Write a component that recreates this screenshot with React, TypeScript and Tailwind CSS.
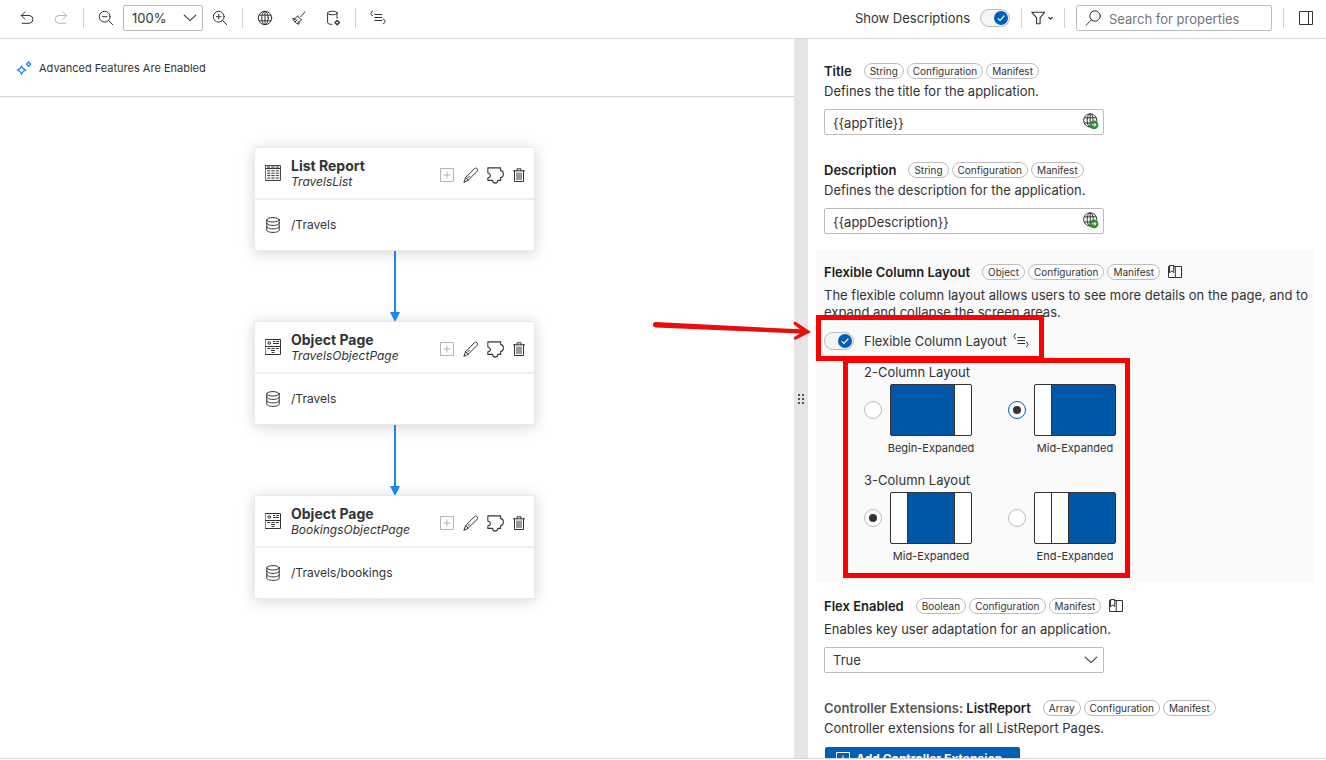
import { Fragment, useState } from "react";
import type { ReactNode } from "react";

function Icon({ children, size = 16, className = "" }: { children: ReactNode; size?: number; className?: string }) {
  return (
    <svg
      width={size}
      height={size}
      viewBox="0 0 16 16"
      fill="none"
      stroke="currentColor"
      strokeWidth="1"
      strokeLinecap="round"
      strokeLinejoin="round"
      aria-hidden="true"
      className={`shrink-0 ${className}`}
    >
      {children}
    </svg>
  );
}

const UndoIcon = () => (
  <Icon>
    <path d="M6 1.8 2.3 5.5 6 9.2M2.3 5.5H10a3.9 3.9 0 0 1 0 7.8H3.2" />
  </Icon>
);
const RedoIcon = () => (
  <Icon>
    <path d="M10 1.8l3.7 3.7L10 9.2M13.7 5.5H6a3.9 3.9 0 0 0 0 7.8h6.8" />
  </Icon>
);
const ZoomIcon = ({ plus = false }: { plus?: boolean }) => (
  <Icon>
    <circle cx="6.7" cy="6.7" r="5.4" />
    <path d="M10.7 10.7l4 4M4.4 6.7H9" />
    {plus && <path d="M6.7 4.4V9" />}
  </Icon>
);
const GlobeIcon = () => (
  <Icon>
    <circle cx="8" cy="8" r="6.7" />
    <ellipse cx="8" cy="8" rx="3.2" ry="6.7" />
    <path d="M8 1.3v13.4M2.2 5.2h11.6M2.2 10.8h11.6" />
  </Icon>
);
const BroomIcon = () => (
  <Icon>
    <path d="M14 1.8 9.6 6.9M6.6 6.2l3.9 3.6M6.6 6.2C5.4 7.8 3.8 8.6 1.8 8.5c1 2.9 3.1 5 6 5.8.2-1.8 1-3.4 2.7-4.5M4.3 11.6l2-1.7M6.4 13.6l1.6-2.2M3 9.9l1.9-.9" />
  </Icon>
);
const DatabaseGearIcon = () => (
  <Icon>
    <ellipse cx="7.3" cy="3" rx="4.7" ry="1.8" />
    <path d="M2.6 3v9.6c0 1 1.8 1.8 4.4 1.8M12 3v5.4" />
    <path d="M12.2 10.4l2.2 2.2-2.2 2.2-2.2-2.2z" strokeWidth="1.4" />
  </Icon>
);
const SourceIcon = () => (
  <Icon>
    <path d="M4.4 4.5h7.8M4.4 7.5h7.8M4.4 10.5h7.8" strokeLinecap="butt" />
    <path d="M2.6 1C1 1 1.9 3 .8 3.4c1.1.4.2 2.4 1.8 2.4M13.4 9c1.6 0 .7 2 1.8 2.4-1.1.4-.2 2.4-1.8 2.4" />
  </Icon>
);
const ChevronDown = ({ className = "" }: { className?: string }) => (
  <svg width="14" height="8" viewBox="0 0 14 8" fill="none" stroke="currentColor" strokeWidth="1.1" strokeLinecap="round" aria-hidden="true" className={className}>
    <path d="M1.2 1.2 7 6.6l5.8-5.4" />
  </svg>
);
const FilterIcon = () => (
  <svg width="24" height="16" viewBox="0 0 24 16" fill="none" stroke="currentColor" strokeWidth="1.1" strokeLinejoin="round" strokeLinecap="round" aria-hidden="true">
    <path d="M.8 2.2h12.9L9.1 7.8v6H5.6v-6z" />
    <path d="M17.8 7.4l1.8 1.7 1.8-1.7" strokeWidth="1.3" />
  </svg>
);
const SearchIcon = ({ className }: { className: string }) => (
  <Icon className={className}>
    <circle cx="10" cy="6" r="5.2" />
    <path d="M6.4 9.8 1 15.4" />
  </Icon>
);
const PanelIcon = () => (
  <Icon>
    <path d="M1.5 1.5h13v13h-13zM10.5 1.5v13" strokeLinecap="butt" strokeLinejoin="round" />
  </Icon>
);
const SparkIcon = () => (
  <Icon className="text-[#1b84ff]">
    <path d="M5.6 4.8C6.2 7.4 7 8.2 9.8 9 7 9.8 6.2 10.6 5.6 13.4 4.9 10.6 4.1 9.8 1.2 9 4.1 8.2 4.9 7.4 5.6 4.8z" strokeWidth="1.2" />
    <path d="M12.6 1l2 2.2-2 2.2-2-2.2z" strokeWidth="1.3" />
  </Icon>
);
const ListReportIcon = () => (
  <Icon>
    <path d="M.6.6h14.8v14.8H.6zM.6 3.5h14.8" />
    <path d="M2 2.1h3M6.2 2.1h3.4M10.8 2.1h3M2.2 5.8h3M6.3 5.8h3.4M10.8 5.8h3M2.2 8.2h3M6.3 8.2h3.4M10.8 8.2h3M2.2 10.6h3M6.3 10.6h3.4M10.8 10.6h3M2.2 13h3M6.3 13h3.4M10.8 13h3" strokeLinecap="butt" />
  </Icon>
);
const ObjectPageIcon = () => (
  <Icon>
    <path d="M.5.5h15v15H.5zM.5 7.5h15" />
    <circle cx="4.2" cy="4" r="1.3" />
    <path d="M8 2.5h2M11.2 2.5H14M8 4.5h6M2.2 9.5h3M6.4 9.5h3.2M10.8 9.5h3M6 11.5h4M6.6 13.5h2.8" strokeLinecap="butt" />
  </Icon>
);
const DatabaseIcon = () => (
  <Icon>
    <ellipse cx="8" cy="2.8" rx="6.2" ry="2.2" />
    <path d="M1.8 2.8v10.4c0 1.2 2.8 2.2 6.2 2.2s6.2-1 6.2-2.2V2.8M1.8 6.2c0 1.2 2.8 2.2 6.2 2.2s6.2-1 6.2-2.2M1.8 9.7c0 1.2 2.8 2.2 6.2 2.2s6.2-1 6.2-2.2" />
  </Icon>
);
const AddIcon = ({ className = "" }: { className?: string }) => (
  <Icon className={className}>
    <path d="M1.5 1.5h13v13h-13zM8 4.6v6.8M4.6 8h6.8" strokeLinecap="butt" />
  </Icon>
);
const EditIcon = () => (
  <Icon>
    <path d="M1 15l1.6-4.4 8.6-8.7c.8-.9 2-1 2.8-.3.8.8.8 1.9 0 2.8L5.2 13.2zM2.6 10.6l2.6 2.6M4.8 10.9l1.6-1.7" />
  </Icon>
);
const ExtensionIcon = () => (
  <Icon size={17}>
    <path d="M.8.8h12v2.6c1.6 0 2.6 1.6 2.6 3.4s-1.2 3-2.6 3.2v2.6h-2.6c-.2 1.6-1.2 2.6-2.5 2.6s-2.3-1-2.5-2.6H.8v-2.4c1.6-.2 2.4-1 2.4-2.2S2.4 6 .8 5.6z" />
  </Icon>
);
const DeleteIcon = () => (
  <Icon>
    <path d="M2.5 3.8h11M3.5 3.8v10.7h9V3.8M6 3.8V1.8h4v2M6 6v6.6M8 6v6.6M10 6v6.6" />
  </Icon>
);
const BookIcon = () => (
  <Icon>
    <path d="M8.3 2.5h6.2v11h-13v-11h1.4M6.7 2.5h1.6v11M2.9 1.5h3.8v7L4.8 7 2.9 8.5z" />
  </Icon>
);
const TranslateIcon = () => (
  <svg width="16" height="17" viewBox="0 0 16 17" fill="none" stroke="currentColor" aria-hidden="true">
    <circle cx="7.2" cy="7.4" r="6.6" />
    <ellipse cx="7.2" cy="7.4" rx="3" ry="6.6" />
    <path d="M1.4 4.8H13M1.4 10H13M7.2.8V14" />
    <circle cx="11" cy="11.8" r="4.4" fill="#2f8a33" stroke="none" />
    <path d="M8.8 11.8h4.2M11.3 10l1.8 1.8-1.8 1.8" stroke="#fff" />
  </svg>
);

function ToolButton({ label, disabled, children }: { label: string; disabled?: boolean; children: ReactNode }) {
  return (
    <button type="button" aria-label={label} disabled={disabled} className="flex h-7 w-[34px] items-center justify-center disabled:text-[#b9b9b9]">
      {children}
    </button>
  );
}

const Separator = () => <span className="mx-[5px] h-5 w-px shrink-0 bg-[#d0d0d0]" />;

function Switch({ id }: { id: string }) {
  const [on, setOn] = useState(true);
  return (
    <span className="relative flex h-[18px] w-[30px] shrink-0">
      <input
        id={id}
        type="checkbox"
        role="switch"
        checked={on}
        onChange={(e) => setOn(e.target.checked)}
        className="peer size-full appearance-none rounded-full border border-[#bdbdbd] bg-[#f5f5f5]"
      />
      <svg viewBox="0 0 14 14" aria-hidden="true" className="pointer-events-none absolute top-0.5 left-0.5 size-3.5 peer-checked:left-3.5">
        <circle cx="7" cy="7" r="7" fill="#0060b8" />
        <path d="M3.8 7.3 6 9.5l4.4-4.8" fill="none" stroke="#fff" strokeWidth="1.2" />
      </svg>
    </span>
  );
}

function Toolbar() {
  return (
    <header className="flex h-[39px] shrink-0 items-center border-b border-[#d5d5d5] pr-[3px] pb-0.5 pl-[10px]">
      <ToolButton label="Undo"><UndoIcon /></ToolButton>
      <ToolButton label="Redo" disabled><RedoIcon /></ToolButton>
      <Separator />
      <ToolButton label="Zoom out"><ZoomIcon /></ToolButton>
      <div className="relative">
        <select aria-label="Zoom level" className="h-[26px] w-20 appearance-none rounded-xs border border-[#bdbdbd] bg-white pl-2 text-[13px]">
          <option>100%</option>
          <option>75%</option>
          <option>50%</option>
        </select>
        <ChevronDown className="pointer-events-none absolute top-[9px] right-1.5" />
      </div>
      <ToolButton label="Zoom in"><ZoomIcon plus /></ToolButton>
      <Separator />
      <ToolButton label="Translations"><GlobeIcon /></ToolButton>
      <ToolButton label="Clean up"><BroomIcon /></ToolButton>
      <ToolButton label="Data settings"><DatabaseGearIcon /></ToolButton>
      <Separator />
      <ToolButton label="Open source"><SourceIcon /></ToolButton>
      <div className="ml-auto flex items-center">
        <label htmlFor="descriptions" className="pt-0.5 pr-2.5 text-[13px]">Show Descriptions</label>
        <Switch id="descriptions" />
        <span className="w-1.5" />
        <Separator />
        <button type="button" aria-label="Filter" className="flex h-7 w-8 items-center justify-center"><FilterIcon /></button>
        <Separator />
        <div className="relative mx-1.5">
          <SearchIcon className="pointer-events-none absolute top-[5px] left-[9px]" />
          <input
            type="search"
            aria-label="Search for properties"
            placeholder="Search for properties"
            className="h-[26px] w-[196px] rounded-xs border border-[#bdbdbd] bg-white pt-px pl-8 text-[13px] placeholder:text-[#757575]"
          />
        </div>
        <Separator />
        <ToolButton label="Toggle panel"><PanelIcon /></ToolButton>
      </div>
    </header>
  );
}

type Page = { title: string; name: string; path: string; icon: ReactNode };
const pages: Page[] = [
  { title: "List Report", name: "TravelsList", path: "/Travels", icon: <ListReportIcon /> },
  { title: "Object Page", name: "TravelsObjectPage", path: "/Travels", icon: <ObjectPageIcon /> },
  { title: "Object Page", name: "BookingsObjectPage", path: "/Travels/bookings", icon: <ObjectPageIcon /> },
];

function PageCard({ page }: { page: Page }) {
  return (
    <article className="h-[104px] w-[281px] border border-[#eaeaea] bg-white shadow-[0_2px_14px_rgba(0,0,0,0.17)]">
      <div className="flex h-[52px] items-center border-b-2 border-[#efefef] pr-[3px] pl-[10px]">
        {page.icon}
        <div className="pt-0.5 pl-[10px]">
          <h2 className="text-[14px] leading-4 font-bold">{page.title}</h2>
          <p className="text-[12px] leading-4 italic">{page.name}</p>
        </div>
        <div className="ml-auto flex items-center pt-1">
          <button type="button" aria-label="Add" disabled className="flex w-6 justify-center text-[#b5b5b5]"><AddIcon /></button>
          <button type="button" aria-label="Edit" className="flex w-6 justify-center"><EditIcon /></button>
          <button type="button" aria-label="Extend" className="flex w-6 justify-center"><ExtensionIcon /></button>
          <button type="button" aria-label="Delete" className="flex w-6 justify-center"><DeleteIcon /></button>
        </div>
      </div>
      <div className="flex h-[50px] items-center gap-[10px] pl-[10px] text-[12px]">
        <DatabaseIcon />
        {page.path}
      </div>
    </article>
  );
}

const Connector = () => (
  <svg width="10" height="70" viewBox="0 0 10 70" fill="#1b84ff" aria-hidden="true" className="relative z-10">
    <path d="M4 0h2v61H4zM0 61h10L5 71z" />
  </svg>
);

function Tags({ items }: { items: string[] }) {
  return (
    <span className="flex gap-[3px] pl-3">
      {items.map((item) => (
        <span key={item} className="rounded-full border border-[#bdbdbd] bg-white px-[5px] text-[10px] leading-[14px] font-normal text-[#333]">
          {item}
        </span>
      ))}
    </span>
  );
}

function Heading({ htmlFor, children, tags, docs }: { htmlFor?: string; children: ReactNode; tags: string[]; docs?: boolean }) {
  return (
    <div className="flex h-5 items-center">
      <label htmlFor={htmlFor} className="pt-0.5 text-[13px] font-semibold text-[#1d1d1d]">{children}</label>
      <Tags items={tags} />
      {docs && (
        <button type="button" aria-label="Documentation" className="pl-[7px]"><BookIcon /></button>
      )}
    </div>
  );
}

function TextProperty({ id, label, description, value }: { id: string; label: string; description: string; value: string }) {
  return (
    <section className="px-2">
      <Heading htmlFor={id} tags={["String", "Configuration", "Manifest"]}>{label}</Heading>
      <p className="mt-0.5 leading-[17px]">{description}</p>
      <div className="relative mt-[9px] w-[280px]">
        <input id={id} defaultValue={value} className="h-[26px] w-full rounded-xs border border-[#bdbdbd] bg-white pt-px pr-7 pl-2" />
        <button type="button" aria-label="Translate value" className="absolute top-1 right-[5px]"><TranslateIcon /></button>
      </div>
    </section>
  );
}

type Layout = { id: string; caption: string; columns: { width: string; filled?: boolean }[]; focused?: boolean; checked?: boolean };
const layoutGroups: { title: string; name: string; options: Layout[] }[] = [
  {
    title: "2-Column Layout",
    name: "two-column",
    options: [
      { id: "two-begin", caption: "Begin-Expanded", columns: [{ width: "flex-1", filled: true }, { width: "w-4" }] },
      { id: "two-mid", caption: "Mid-Expanded", columns: [{ width: "w-4" }, { width: "flex-1", filled: true }], checked: true, focused: true },
    ],
  },
  {
    title: "3-Column Layout",
    name: "three-column",
    options: [
      { id: "three-mid", caption: "Mid-Expanded", columns: [{ width: "w-4" }, { width: "flex-1", filled: true }, { width: "w-4" }], checked: true },
      { id: "three-end", caption: "End-Expanded", columns: [{ width: "w-4" }, { width: "w-4" }, { width: "flex-1", filled: true }] },
    ],
  },
];

function LayoutOption({ option, group }: { option: Layout; group: string }) {
  return (
    <div className="flex w-36 gap-2">
      <input
        id={option.id}
        type="radio"
        name={group}
        defaultChecked={option.checked}
        className={`mt-[17px] grid size-[18px] shrink-0 appearance-none place-items-center rounded-full border bg-white before:size-2 before:rounded-full before:content-[''] checked:before:bg-[#333] ${
          option.focused ? "border-[#0060b8]" : "border-[#bdbdbd]"
        }`}
      />
      <label htmlFor={option.id} className="flex w-[82px] flex-col items-center">
        <span className="flex h-[52px] w-full gap-px overflow-hidden rounded-xs border border-[#333] bg-[#333]">
          {option.columns.map((column, i) => (
            <span key={i} className={`${column.width} ${column.filled ? "bg-[#0057a8]" : "bg-white"}`} />
          ))}
        </span>
        <span className="mt-1 text-[11px] leading-4 whitespace-nowrap">{option.caption}</span>
      </label>
    </div>
  );
}

function FlexibleColumnSection() {
  return (
    <section className="relative mt-4 bg-[#fafafa] pt-3 pb-[18px] pl-2">
      <Heading tags={["Object", "Configuration", "Manifest"]} docs>Flexible Column Layout</Heading>
      <p className="mt-[5px] leading-[17px]">
        The flexible column layout allows users to see more details on the page, and to expand and collapse the screen areas.
      </p>
      <div className="mt-[10px] flex h-5 items-center">
        <Switch id="fcl" />
        <label htmlFor="fcl" className="pt-0.5 pr-1.5 pl-[10px]">Flexible Column Layout</label>
        <button type="button" aria-label="Open source"><SourceIcon /></button>
      </div>
      <div className="flex flex-col gap-[14px] pt-[11px] pl-10">
        {layoutGroups.map((group) => (
          <fieldset key={group.name}>
            <legend className="h-[22px] leading-5">{group.title}</legend>
            <div className="flex">
              {group.options.map((option) => (
                <LayoutOption key={option.id} option={option} group={group.name} />
              ))}
            </div>
          </fieldset>
        ))}
      </div>
      <div className="pointer-events-none absolute top-[65px] left-0 h-[46px] w-[228px] border-5 border-[#ff0000]" />
      <div className="pointer-events-none absolute top-[108px] left-[27px] h-[220px] w-[287px] border-5 border-[#ff0000]" />
      <svg width="164" height="28" viewBox="0 0 164 28" fill="none" aria-hidden="true" className="pointer-events-none absolute top-[67px] right-full">
        <path d="M3.5 5 148 12.3 142 7.4c-1.4-1.6.2-3.2 2-2.4L159 15 144 22.6c-1.8.8-3.2-1.2-1.6-2.6L148 16.6 3.5 10.4c-3.4-.4-3.4-5 0-5.400z" fill="#e80c0c" />
      </svg>
    </section>
  );
}

function PropertiesPanel() {
  return (
    <aside className="h-full w-[518px] shrink-0 pt-[22px] pr-3 pl-2 text-[13px]">
      <div className="flex flex-col gap-[25px]">
        <TextProperty id="title" label="Title" description="Defines the title for the application." value="{{appTitle}}" />
        <TextProperty id="description" label="Description" description="Defines the description for the application." value="{{appDescription}}" />
      </div>
      <FlexibleColumnSection />
      <div className="mt-[14px] flex flex-col gap-[25px]">
        <section className="px-2">
          <Heading htmlFor="flex-enabled" tags={["Boolean", "Configuration", "Manifest"]} docs>Flex Enabled</Heading>
          <p className="mt-[5px] leading-[17px]">Enables key user adaptation for an application.</p>
          <div className="relative mt-[9px] w-[280px]">
            <select id="flex-enabled" className="h-[26px] w-full appearance-none rounded-xs border border-[#bdbdbd] bg-white pt-0.5 pl-2">
              <option>True</option>
              <option>False</option>
            </select>
            <ChevronDown className="pointer-events-none absolute top-[9px] right-1.5" />
          </div>
        </section>
        <section className="px-2">
          <Heading tags={["Array", "Configuration", "Manifest"]}>
            <span className="text-[#555]">Controller Extensions:</span> ListReport
          </Heading>
          <p className="mt-0.5 leading-[17px]">Controller extensions for all ListReport Pages.</p>
          <button type="button" className="mt-[10px] ml-px flex h-[26px] w-[195px] items-center gap-[5px] rounded-xs bg-[#0060b8] pb-[3px] pl-[10px] text-[12px] font-bold whitespace-nowrap text-white">
            <AddIcon />
            Add Controller Extension
          </button>
        </section>
      </div>
    </aside>
  );
}

export default function App() {
  return (
    <div className="flex h-screen flex-col bg-white pb-px font-['Inter','Liberation_Sans',sans-serif] text-[#333]">
      <Toolbar />
      <div className="flex min-h-0 flex-1 overflow-hidden border-b border-[#d5d5d5]">
        <main className="flex min-w-0 flex-1 flex-col">
          <div className="flex h-[58px] shrink-0 items-center gap-[7px] border-b border-[#d5d5d5] pt-0.5 pl-4 text-[11px]">
            <SparkIcon />
            Advanced Features Are Enabled
          </div>
          <div className="flex flex-1 flex-col items-center pt-[50px] pr-[5px]">
            {pages.map((page, i) => (
              <Fragment key={page.name}>
                {i > 0 && <Connector />}
                <PageCard page={page} />
              </Fragment>
            ))}
          </div>
        </main>
        <div role="separator" aria-orientation="vertical" className="flex w-[14px] shrink-0 items-center justify-center bg-[#e5e5e5]">
          <svg width="6" height="10" viewBox="0 0 6 10" fill="#555" aria-hidden="true">
            <path d="M0 0h2v2H0zM4 0h2v2H4zM0 4h2v2H0zM4 4h2v2H4zM0 8h2v2H0zM4 8h2v2H4z" />
          </svg>
        </div>
        <PropertiesPanel />
      </div>
    </div>
  );
}
